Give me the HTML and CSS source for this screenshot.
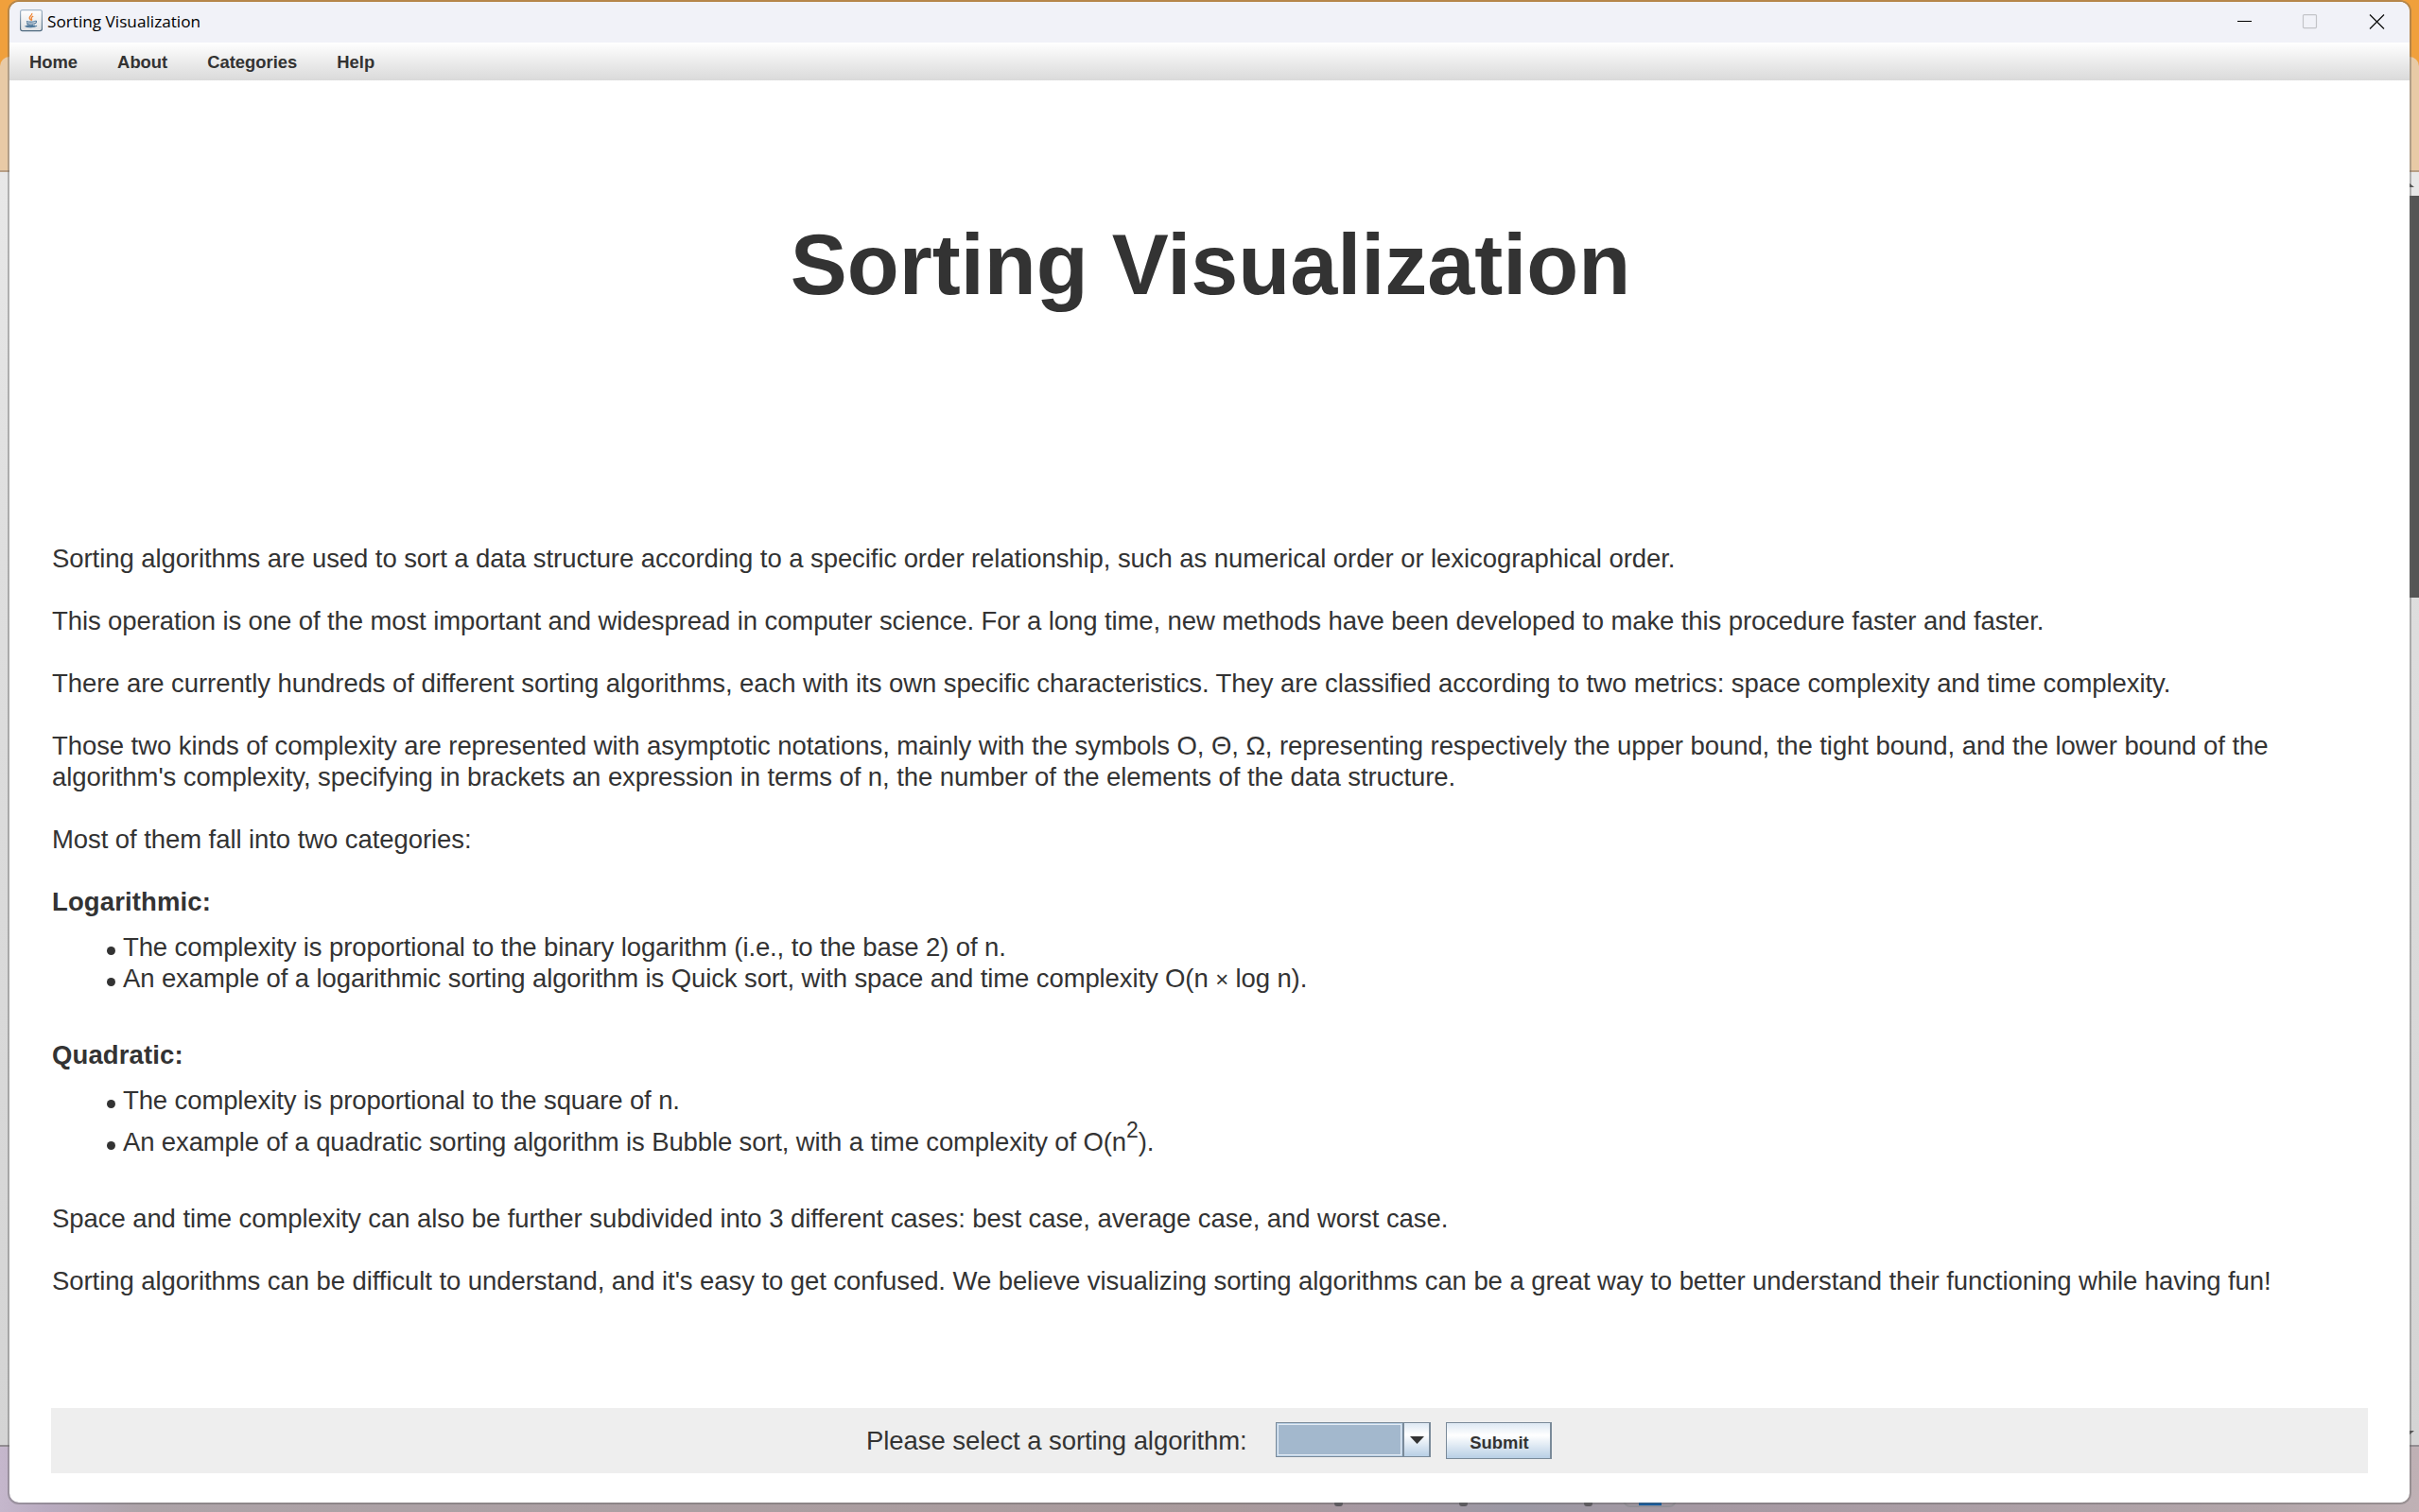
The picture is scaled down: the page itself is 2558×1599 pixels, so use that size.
FILE: index.html
```html
<!DOCTYPE html>
<html lang="en">
<head>
<meta charset="utf-8">
<title>Sorting Visualization</title>
<link rel="stylesheet" href="styles.css">
</head>
<body>
<div class="desktop">
  <div class="backdrop">
    <div class="backdrop-tabs"></div>
    <div class="backdrop-toolbar"></div>
    <div class="backdrop-page">
      <div class="scrollbar">
        <i class="scroll-arrow up"></i>
        <i class="scroll-thumb"></i>
        <i class="scroll-arrow down"></i>
      </div>
    </div>
    <div class="taskbar">
      <i class="task-dot dot-a"></i>
      <i class="task-dot dot-b"></i>
      <i class="task-dot dot-c"></i>
      <i class="task-button"></i>
    </div>
  </div>

  <div class="window">
    <header class="titlebar">
      <svg class="app-icon" viewBox="0 0 24 24" width="24" height="24">
        <defs>
          <linearGradient id="edge" x1="0" y1="0" x2="0" y2="1"><stop offset="0" stop-color="#a3b6c8"/><stop offset="1" stop-color="#4f6a80"/></linearGradient>
          <linearGradient id="face" x1="0" y1="0" x2="0" y2="1"><stop offset="0" stop-color="#fff"/><stop offset="1" stop-color="#dfe1e3"/></linearGradient>
        </defs>
        <rect x=".6" y=".6" width="22.8" height="22" rx="2" fill="url(#face)" stroke="url(#edge)" stroke-width="1.2"/>
        <path d="M12.8 4c.6 2.300-3.300 3.200-2.600 5.200.3.900 1.200 1.400 1.600 2.200M14.200 7.200c-1.500.7-2.600 1.500-1.800 2.600.5.700.2 1.400-.4 1.900" fill="none" stroke="#ee8433" stroke-width="1.300"/>
        <path d="M7 12.500c2 .8 7 .8 9 0M7.500 13.500c.2 1.500.8 2.500 1.600 2.800 1.500.4 4 .4 5.200 0M8 15h7M15.800 12.300c2.500-.7 2.400 2.100-.8 2.800M5.500 17.500c2 1.600 10 1.600 12.500-.2M7 17c2.500 1 7 1 9 0" fill="none" stroke="#50799b" stroke-width="1.100"/>
      </svg>
      <span class="window-title">Sorting Visualization</span>
      <svg class="controls" viewBox="0 0 156 16" width="156" height="16">
        <path d="M0 7.500h15" stroke="#000" fill="none"/>
        <rect x="69.500" y=".6" width="14" height="14" rx="1" fill="none" stroke="#c3c4c8" stroke-width="1.200"/>
        <path d="M140 .5l15 15M155 .5l-15 15" stroke="#111" stroke-width="1.300" fill="none"/>
      </svg>
    </header>
    <nav class="menubar">
      <span>Home</span><span>About</span><span>Categories</span><span>Help</span>
    </nav>
    <main class="content">
      <h1>Sorting Visualization</h1>
      <article class="intro">
        <p>Sorting algorithms are used to sort a data structure according to a specific order relationship, such as numerical order or lexicographical order.</p>
        <p class="tight">This operation is one of the most important and widespread in computer science. For a long time, new methods have been developed to make this procedure faster and faster.</p>
        <p>There are currently hundreds of different sorting algorithms, each with its own specific characteristics. They are classified according to two metrics: space complexity and time complexity.</p>
        <p>Those two kinds of complexity are represented with asymptotic notations, mainly with the symbols Ο, Θ, Ω, representing respectively the upper bound, the tight bound, and the lower bound of the<br>algorithm's complexity, specifying in brackets an expression in terms of n, the number of the elements of the data structure.</p>
        <p>Most of them fall into two categories:</p>
        <h2>Logarithmic:</h2>
        <ul>
          <li>The complexity is proportional to the binary logarithm (i.e., to the base 2) of n.</li>
          <li><span>An example of a logarithmic sorting algorithm is Quick sort, with space and time complexity Ο(n <span class="times">×</span> log n).</span></li>
        </ul>
        <h2>Quadratic:</h2>
        <ul>
          <li>The complexity is proportional to the square of n.</li>
          <li class="raised">An example of a quadratic sorting algorithm is Bubble sort, with a time complexity of Ο(n<sup>2</sup>).</li>
        </ul>
        <p>Space and time complexity can also be further subdivided into 3 different cases: best case, average case, and worst case.</p>
        <p>Sorting algorithms can be difficult to understand, and it's easy to get confused. We believe visualizing sorting algorithms can be a great way to better understand their functioning while having fun!</p>
      </article>
      <footer class="picker">
        <span class="picker-label">Please select a sorting algorithm:</span>
        <div class="combo">
          <div class="combo-value"></div>
          <div class="combo-arrow"><svg viewBox="0 0 15 8" width="15" height="8"><path d="M0 0h15L7.500 8z" fill="#333"/></svg></div>
        </div>
        <button class="submit">Submit</button>
      </footer>
    </main>
  </div>
</div>
</body>
</html>
```

FILE: styles.css
```css
* { box-sizing: border-box; }
html, body { margin: 0; height: 100%; overflow: hidden; }
body { font-family: "Liberation Sans", Arial, sans-serif; color: #333; }

.desktop {
  position: relative;
  height: 1599px;
  padding: 0 8px 8px;
}

/* Browser window and taskbar behind the application */
.backdrop {
  position: absolute;
  inset: 0;
  display: flex;
  flex-direction: column;
  background: #f0a03c;
}
.backdrop-tabs { height: 60px; }
.backdrop-toolbar {
  height: 122px;
  background: #e8caa6;
  border-bottom: 2px solid #b89f85;
  border-radius: 10px 10px 0 0;
}
.backdrop-page {
  height: 1348px;
  display: flex;
  justify-content: flex-end;
  background: linear-gradient(#e8e8e8, #dedede 30%, #d4d4d4);
  border-bottom: 2px solid #928d91;
}
.scrollbar {
  width: 16px;
  display: flex;
  flex-direction: column;
  align-items: flex-end;
}
.scroll-arrow { width: 0; height: 0; border: solid transparent; margin-right: 5px; }
.scroll-arrow.up { margin-top: 11px; border-width: 0 6px 5px; border-bottom-color: #555; }
.scroll-thumb { width: 16px; height: 425px; margin-top: 9px; background: #555; }
.scroll-arrow.down { margin-top: 881px; border-width: 5px 6px 0; border-top-color: #555; }
.taskbar {
  position: relative;
  flex: 1;
  background: linear-gradient(90deg, #c5b7cc 0, #b9abc0 50px, #ada3a8 150px, #a99a9c 1300px, #a698a2 1450px, #9b98a4 1600px, #a598a2 1800px, #b3a6aa 2400px, #bfb1b5);
}
.task-dot { position: absolute; bottom: 6px; width: 9px; height: 6px; border-radius: 3px; background: #5d5b60; }
.dot-a { left: 1411px; }
.dot-b { left: 1543px; }
.dot-c { left: 1675px; }
.task-button {
  position: absolute;
  left: 1716px;
  bottom: 5px;
  width: 57px;
  height: 30px;
  border: 2px solid #928f96;
  border-radius: 8px;
  background: linear-gradient(90deg, transparent 15px, #0a5aa6 15px, #0a5aa6 39px, transparent 39px);
}

.window {
  position: relative;
  height: 1591px;
  display: flex;
  flex-direction: column;
  overflow: hidden;
  border: 2px solid rgba(95, 95, 95, .4);
  border-radius: 12px;
  background: #fff;
  background-clip: padding-box;
}
.titlebar {
  height: 43px;
  flex: none;
  display: flex;
  align-items: flex-start;
  background: #f1f2f8;
}
.app-icon { margin: 8px 0 0 11px; }
.window-title {
  margin: 9px 0 0 5px;
  font: 17.200px/24px "Open Sans", "Noto Sans", sans-serif;
  color: #000;
}
.controls { margin: 13px 26px 0 auto; }
.menubar {
  height: 40px;
  flex: none;
  display: flex;
  gap: 42px;
  padding-left: 21px;
  font: bold 18.400px/41px "Liberation Sans", Arial, sans-serif;
  background: linear-gradient(#fff, #ececec 50%, #dadada);
}
.content {
  flex: 1;
  display: flex;
  flex-direction: column;
  padding: 0 44px 31px;
}
h1 {
  margin: 145px 0 0;
  padding-left: 2px;
  height: 344px;
  text-align: center;
  font-size: 90px;
  line-height: 100px;
  letter-spacing: 0;
}
.intro {
  flex: 1;
  font-size: 27.500px;
  line-height: 33px;
  letter-spacing: -.075px;
  white-space: nowrap;
}
.intro p { margin: 0 0 33px; padding-left: 1px; }
.intro .tight { letter-spacing: -.1px; }
.intro h2 {
  margin: 0 0 15px;
  padding-left: 1px;
  font-size: inherit;
  line-height: inherit;
  letter-spacing: .12px;
}
.intro ul { margin: 0 0 48px; padding: 0; list-style: none; letter-spacing: -.115px; }
.intro li { display: flex; padding-left: 59px; }
.intro li::before {
  content: "";
  flex: none;
  width: 9px;
  height: 9px;
  margin: 16px 8px 0 0;
  border-radius: 50%;
  background: #333;
}
.intro li.raised { margin-top: 11px; letter-spacing: -.135px; }
.times { font-size: 24px; line-height: 1; }
.intro sup {
  height: 23px;
  margin-top: -12px;
  font-size: 23px;
  line-height: 33px;
}
.picker {
  height: 69px;
  flex: none;
  display: flex;
  align-items: flex-start;
  padding: 15px 0 0 862px;
  background: #eee;
}
.picker-label { width: 433px; font-size: 27.500px; line-height: 40px; letter-spacing: -.07px; }
.combo {
  width: 164px;
  height: 37px;
  display: flex;
  border: solid #7a8a99;
  border-width: 1px 2px 1px 1px;
}
.combo-value {
  flex: 1;
  border: solid #b8cfe5;
  border-width: 1px;
  outline: 1px solid #e3ebf3;
  outline-offset: -2px;
  background: #a3b8cd;
}
.combo-arrow {
  width: 28px;
  display: flex;
  justify-content: center;
  padding-top: 14px;
  border-left: 2px solid #7a8a99;
  background: linear-gradient(#dde8f3, #fff 35%, #b8cfe5);
}
.submit {
  width: 112px;
  height: 39px;
  margin-left: 16px;
  padding: 4px 0 0 2px;
  border: solid #7a8a99;
  border-width: 1px 2px 1px 1px;
  color: #333;
  font: bold 18.400px "Liberation Sans", Arial, sans-serif;
  background: linear-gradient(#dde8f3, #fff 35%, #b8cfe5);
}
```
